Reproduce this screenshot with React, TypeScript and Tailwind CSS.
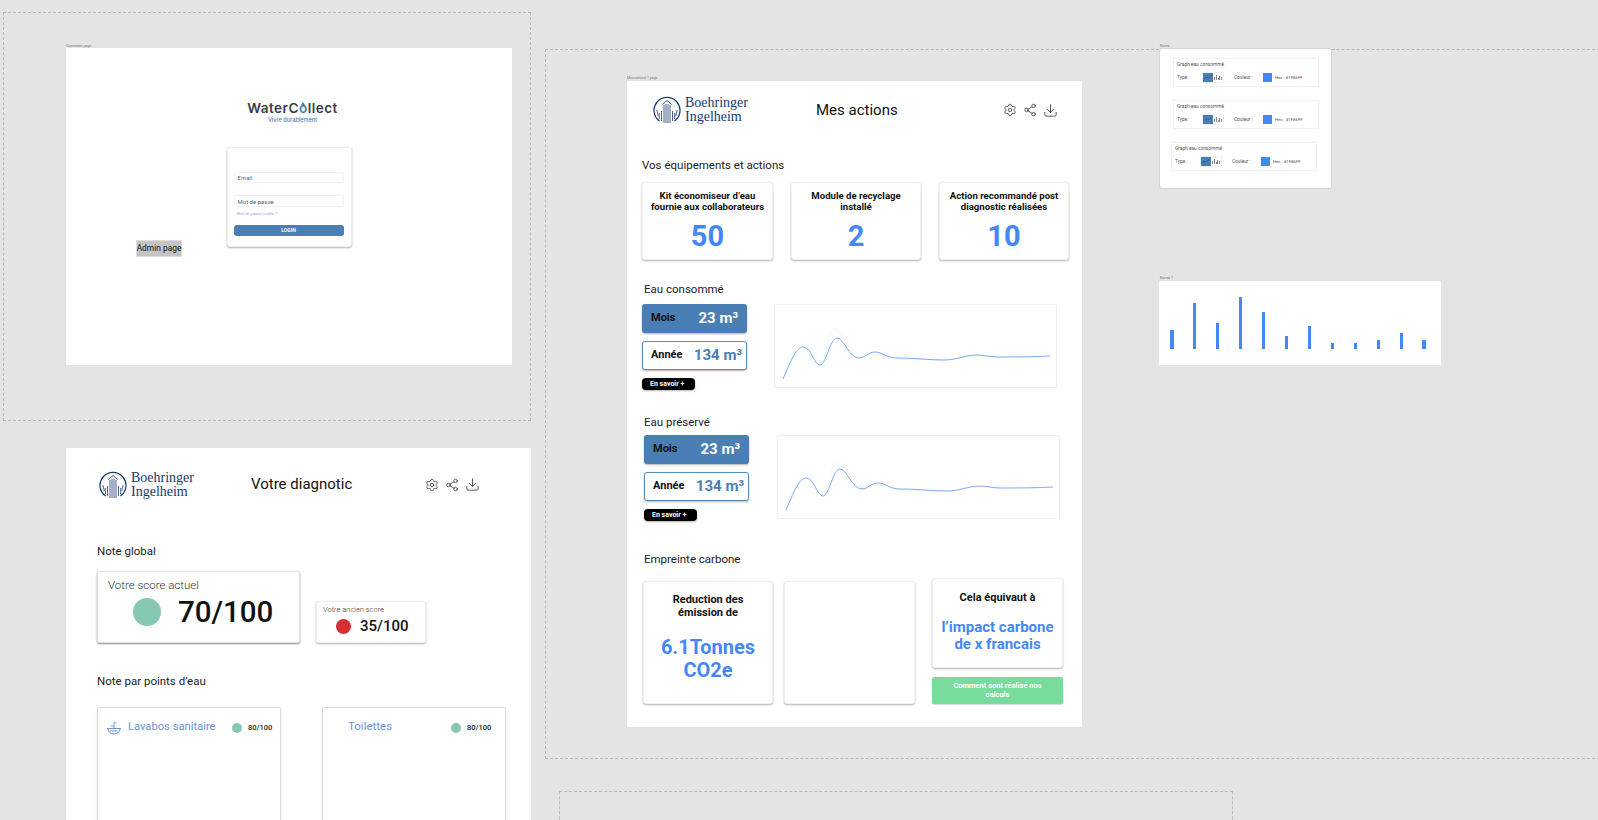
import { Settings, Share2, Download } from "lucide-react";

const BAR_HEIGHTS = [19, 46, 26, 52, 37, 13, 23, 6, 6, 9, 16, 9];

const CURVE =
  "M8 74 C15 58,21 42,28 42 C36 42,39 60,45 60 C51 60,55 33,62 33 C69 33,74 53,84 53 C90 53,93 47,100 47 C107 47,112 53,122 53 C140 53,155 55,169 55 C182 55,190 50,202 50 C210 50,214 52,222 52 C240 52,258 52,275 51";
const CURVE_FAINT =
  "M8 74 C15 55,21 38,28 40 C36 42,39 58,45 58 C51 58,53 24,59 24 C66 24,74 50,84 52 C90 53,93 50,100 49 C107 49,112 54,122 54 C140 54,155 55,169 55 C182 55,190 51,202 51 C210 51,214 52,222 52";

function Logo() {
  return (
    <div className="flex items-center gap-[4px]">
      <svg width="28" height="28" viewBox="0 0 28 28" fill="none" stroke="#163a72">
        <path d="M6.5 25 A13 13 0 1 1 21.5 25" strokeWidth="1.2" />
        <path d="M9.5 8.5 L14 4.5 L18.5 8.5" strokeWidth="0.9" />
        <path
          d="M11 9 V27 M13 8 V27 M15 8 V27 M17 9 V27 M8.5 15 V25 M19.5 15 V25 M6.3 17 V23 M21.7 17 V23 M3.8 14 L5.3 20 M24.2 14 L22.7 20"
          strokeWidth="0.8"
        />
      </svg>
      <div className="font-['Liberation_Serif',serif] text-[14px] leading-[14px] text-[#163a72]">
        <div>Boehringer</div>
        <div>Ingelheim</div>
      </div>
    </div>
  );
}

function ActionIcons() {
  return (
    <div className="flex items-center gap-[6px] text-[#222]">
      <Settings size={14} strokeWidth={1.2} />
      <Share2 size={14} strokeWidth={1.2} />
      <Download size={15} strokeWidth={1.2} />
    </div>
  );
}

function Label({ children, className = "" }: { children: React.ReactNode; className?: string }) {
  return <div className={`text-[11.5px] leading-[14px] text-[#1c1c1c] ${className}`}>{children}</div>;
}

function Kpi({ title, value, width }: { title: string[]; value: string; width: string }) {
  return (
    <div className={`flex h-[78px] flex-col items-center rounded-[3px] border border-[#efefef] bg-white pt-[7px] shadow-[0_1px_2px_rgba(0,0,0,0.3)] ${width}`}>
      <div className="text-center text-[9.6px] font-bold leading-[11px] text-[#111]">
        {title.map((t) => (
          <div key={t}>{t}</div>
        ))}
      </div>
      <div className="mt-[7px] text-[29px] font-bold leading-[34px] text-[#4488f8]">{value}</div>
    </div>
  );
}

function WaterBlock({ chartGap }: { chartGap: string }) {
  return (
    <div className="flex items-start">
      <div className="flex w-[105px] flex-col items-start gap-[8px]">
        <div className="flex h-[29px] w-full items-center justify-between rounded-[3px] bg-[#4a7fb5] px-[9px] shadow-[0_1px_2px_rgba(0,0,0,0.3)]">
          <span className="text-[11px] font-bold text-[#111]">Mois</span>
          <span className="text-[15px] font-bold text-white">23 m³</span>
        </div>
        <div className="flex h-[29px] w-full items-center justify-between rounded-[3px] border-[1.5px] border-[#5a8bbd] bg-white pl-[8px] pr-[4px] shadow-[0_1px_2px_rgba(0,0,0,0.3)]">
          <span className="text-[11px] font-bold text-[#111]">Année</span>
          <span className="text-[15px] font-bold text-[#4a7fb5]">134 m³</span>
        </div>
        <div className="flex h-[12px] w-[53px] items-center rounded-[4px] bg-black pl-[8px] text-[7px] font-bold text-white shadow-[0_1px_2px_rgba(0,0,0,0.3)]">
          En savoir +
        </div>
      </div>
      <div className={`h-[84px] w-[283px] rounded-[2px] border border-[#f0f0f0] bg-white ${chartGap}`}>
        <svg width="283" height="84" viewBox="0 0 283 84" fill="none">
          <path d={CURVE_FAINT} stroke="#e2f4f0" strokeWidth="0.6" />
          <path d={CURVE} stroke="#6ea2f5" strokeWidth="0.9" />
        </svg>
      </div>
    </div>
  );
}

function Dot({ size, color }: { size: string; color: string }) {
  return <span className={`block rounded-full ${size} ${color}`} />;
}

function PointCard({ name, icon }: { name: string; icon?: boolean }) {
  return (
    <div className="flex h-[200px] w-[184px] items-start rounded-[2px] border border-[#dcdcdc] bg-white pt-[12px] shadow-[0_1px_2px_rgba(0,0,0,0.15)]">
      {icon ? (
        <svg className="ml-[8px] mt-[1px]" width="16" height="14" viewBox="0 0 16 14" fill="none" stroke="#6b94cf" strokeWidth="1">
          <path d="M1 7.5 H15 M2 7.5 C2 11,5 13,8 13 C11 13,14 11,14 7.5 M4 10 H12" />
          <path d="M8 7 V2 C8 1,10 1,10 2.5 M5 5.5 C5 4.5,7 4.5,7 5.5" />
        </svg>
      ) : (
        <span className="ml-[8px] w-[16px]" />
      )}
      {icon ? (
        <span className="ml-[6px] w-[104px] text-[11.2px] leading-[14px] text-[#6b94cf]">{name}</span>
      ) : (
        <span className="-mt-[1px] ml-[1px] w-[103px] text-[11.5px] leading-[14px] text-[#6b94cf]">{name}</span>
      )}
      <span className="mt-[2px] flex items-center gap-[6px]">
        <Dot size="h-[10px] w-[10px]" color="bg-[#86c8b4]" />
        <span className="text-[7.5px] font-medium text-[#222]">80/100</span>
      </span>
    </div>
  );
}

function GraphSetting({ shift }: { shift?: boolean }) {
  return (
    <div className={`flex h-[29px] w-[146px] flex-col border border-[#f1f1f1] bg-white pl-[3px] pt-[3px] text-[4.8px] leading-[5px] text-[#555] shadow-[0_0_1px_rgba(0,0,0,0.1)] ${shift ? "-ml-[2px]" : ""}`}>
      <div>Graph eau consommé</div>
      <div className="mt-[5px] flex items-center">
        <span className="w-[25px]">Type :</span>
        <span className="flex h-[11px] w-[22px] rounded-[1px] border border-[#eee]">
          <span className="flex w-[10px] items-center justify-center bg-[#4a7fb5]">
            <svg width="8" height="5" viewBox="0 0 8 5" fill="none" stroke="#24466d" strokeWidth="0.6">
              <path d="M0 4 C2 1,3 4,5 2 C6 1,7 1,8 1" />
            </svg>
          </span>
          <span className="flex flex-1 items-end justify-center gap-[1px] pb-[2px]">
            <span className="h-[3px] w-[0.7px] bg-[#888]" />
            <span className="h-[5px] w-[0.7px] bg-[#888]" />
            <span className="h-[2px] w-[0.7px] bg-[#888]" />
            <span className="h-[4px] w-[0.7px] bg-[#888]" />
            <span className="h-[3px] w-[0.7px] bg-[#888]" />
          </span>
        </span>
        <span className="ml-[10px] w-[29px]">Couleur :</span>
        <span className="h-[9px] w-[9px] bg-[#4488f8]" />
        <span className="ml-[3px] text-[4.3px]">Hex : #1F86FF</span>
      </div>
    </div>
  );
}

function FrameName({ children, className }: { children: string; className: string }) {
  return <div className={`absolute text-[3.5px] leading-[4px] text-[#777] ${className}`}>{children}</div>;
}

export default function App() {
  return (
    <div className="relative h-[820px] w-[1598px] overflow-hidden bg-[#e4e4e4] font-['Roboto',sans-serif]">
      {/* canvas sections */}
      <div className="absolute left-[3px] top-[12px] h-[409px] w-[528px] border border-dashed border-[#b9b9b9]" />
      <div className="absolute left-[545px] top-[49px] h-[710px] w-[1100px] border border-dashed border-[#b9b9b9]" />
      <div className="absolute left-[559px] top-[791px] h-[100px] w-[674px] border border-dashed border-[#b9b9b9]" />

      <FrameName className="left-[66px] top-[44px]">Connexion page</FrameName>
      <FrameName className="left-[627px] top-[76px]">Mes actions 1 page</FrameName>
      <FrameName className="left-[1160px] top-[44px]">Notes</FrameName>
      <FrameName className="left-[1160px] top-[276px]">Barres 1</FrameName>

      {/* login */}
      <div className="absolute left-[66px] top-[48px] flex h-[317px] w-[446px] flex-col items-center bg-white">
        <div className="ml-[7px] mt-[53px] font-['Inter',sans-serif] text-[13.5px] font-semibold leading-[14px] tracking-[0.5px] text-[#3a3d4a]">
          WaterC
          <span className="relative text-[#3d7fc0]">
            o
            <span className="absolute left-1/2 top-[1.5px] h-0 w-0 -translate-x-1/2 border-x-[2px] border-b-[3px] border-x-transparent border-b-[#3d7fc0]" />
          </span>
          llect
        </div>
        <div className="ml-[7px] mt-[2px] font-['Inter',sans-serif] text-[5.6px] font-medium leading-[6px] text-[#4a7fb5]">
          Vivre durablement
        </div>
        <div className="mt-[24px] flex h-[100px] w-[125px] flex-col rounded-[3px] border border-[#eeeeee] bg-white px-[6px] pt-[24px] shadow-[0_1px_2px_rgba(0,0,0,0.3)]">
          <div className="flex h-[11px] w-[110px] items-center rounded-[2px] border border-[#f3f3f3] pl-[3px] text-[6px] text-[#666]">Email</div>
          <div className="mt-[12px] flex h-[12px] w-[110px] items-center rounded-[2px] border border-[#f3f3f3] pl-[3px] text-[6px] text-[#666]">Mot de passe</div>
          <div className="mt-[4px] pl-[3px] text-[4.2px] leading-[6px] text-[#8fb0d2]">Mot de passe oublié ?</div>
          <div className="mt-[8px] flex h-[11px] w-[110px] items-center justify-center rounded-[3px] bg-[#4a7fb5] text-[5px] font-bold text-white">LOGIN</div>
        </div>
        <div className="absolute left-[70px] top-[192px] flex h-[17px] w-[46px] items-center justify-center whitespace-nowrap border border-[#dddddd] bg-[#c4c4c4] text-[8.4px] text-[#111]">
          Admin page
        </div>
      </div>

      {/* diagnostic */}
      <div className="absolute left-[66px] top-[448px] h-[372px] w-[465px] overflow-hidden bg-white pl-[31px]">
        <div className="ml-[2px] mt-[23px] flex h-[27px] items-center">
          <div className="w-[152px]">
            <Logo />
          </div>
          <div className="w-[174px] text-[15px] text-[#111]">Votre diagnotic</div>
          <ActionIcons />
        </div>
        <Label className="mt-[46px]">Note global</Label>
        <div className="mt-[13px] flex items-end gap-[16px]">
          <div className="h-[72px] w-[203px] rounded-[2px] border border-[#e0e0e0] bg-white pl-[10px] pt-[6px] shadow-[0_1px_2px_rgba(0,0,0,0.45)]">
            <div className="text-[11.5px] font-light leading-[14px] text-[#333]">Votre score actuel</div>
            <div className="ml-[25px] mt-[3px] flex items-center gap-[17px]">
              <Dot size="h-[28px] w-[28px]" color="bg-[#86c8b4]" />
              <span className="text-[29.5px] font-medium leading-[34px] text-[#111]">70/100</span>
            </div>
          </div>
          <div className="h-[42px] w-[110px] rounded-[2px] border border-[#eeeeee] bg-white pl-[6px] pt-[4px] shadow-[0_1px_2px_rgba(0,0,0,0.3)]">
            <div className="text-[7.5px] font-light leading-[8px] text-[#333]">Votre ancien score</div>
            <div className="ml-[13px] mt-[3px] flex items-center gap-[9px]">
              <Dot size="h-[15px] w-[15px]" color="bg-[#d62f36]" />
              <span className="text-[15px] font-medium leading-[18px] text-[#111]">35/100</span>
            </div>
          </div>
        </div>
        <Label className="mt-[31px]">Note par points d’eau</Label>
        <div className="mt-[19px] flex gap-[41px]">
          <PointCard name="Lavabos sanitaire" icon />
          <PointCard name="Toilettes" />
        </div>
      </div>

      {/* mes actions */}
      <div className="absolute left-[627px] top-[81px] h-[646px] w-[455px] bg-white pl-[15px]">
        <div className="ml-[11px] pt-[15px]">
          <div className="flex h-[28px] items-center">
            <div className="w-[163px]">
              <Logo />
            </div>
            <div className="w-[187px] text-[15px] text-[#111]">Mes actions</div>
            <ActionIcons />
          </div>
        </div>
        <Label className="mt-[34px]">Vos équipements et actions</Label>
        <div className="mt-[10px] flex gap-[18px]">
          <Kpi width="w-[131px]" title={["Kit économiseur d’eau", "fournie aux collaborateurs"]} value="50" />
          <Kpi width="w-[130px]" title={["Module de recyclage", "installé"]} value="2" />
          <Kpi width="w-[130px]" title={["Action recommandé post", "diagnostic réalisées"]} value="10" />
        </div>
        <Label className="ml-[2px] mt-[22px]">Eau consommé</Label>
        <div className="mt-[8px]">
          <WaterBlock chartGap="ml-[27px]" />
        </div>
        <Label className="ml-[2px] mt-[25px]">Eau préservé</Label>
        <div className="ml-[2px] mt-[6px]">
          <WaterBlock chartGap="ml-[28px]" />
        </div>
        <Label className="ml-[2px] mt-[31px]">Empreinte carbone</Label>
        <div className="ml-[1px] mt-[12px] flex items-start">
          <div className="mt-[3px] flex h-[123px] w-[130px] flex-col items-center rounded-[3px] border border-[#efefef] bg-white pt-[11px] text-center shadow-[0_1px_2px_rgba(0,0,0,0.3)]">
            <div className="text-[11px] font-bold leading-[13px] text-[#111]">
              Reduction des
              <br />
              émission de
            </div>
            <div className="mt-[17px] text-[20px] font-bold leading-[23px] text-[#4488f8]">
              6.1Tonnes
              <br />
              CO2e
            </div>
          </div>
          <div className="ml-[11px] mt-[3px] h-[123px] w-[131px] rounded-[3px] border border-[#efefef] bg-white shadow-[0_1px_2px_rgba(0,0,0,0.3)]" />
          <div className="ml-[17px] flex w-[131px] flex-col gap-[9px]">
            <div className="flex h-[90px] flex-col items-center rounded-[3px] border border-[#efefef] bg-white pt-[12px] text-center shadow-[0_1px_2px_rgba(0,0,0,0.3)]">
              <div className="text-[11px] font-bold leading-[13px] text-[#111]">Cela équivaut à</div>
              <div className="mt-[15px] text-[15px] font-bold leading-[17px] text-[#4488f8]">
                l’impact carbone
                <br />
                de x francais
              </div>
            </div>
            <div className="flex h-[27px] items-center justify-center rounded-[2px] bg-[#78dc9c] text-center text-[7.5px] font-bold leading-[8.5px] text-white shadow-[0_1px_1px_rgba(0,0,0,0.15)]">
              Comment sont réalisé nos
              <br />
              calculs
            </div>
          </div>
        </div>
      </div>

      {/* notes */}
      <div className="absolute left-[1159px] top-[48px] flex h-[141px] w-[173px] flex-col gap-[13px] rounded-[3px] border border-[#d6d6d6] bg-white pl-[13px] pt-[9px]">
        <GraphSetting />
        <GraphSetting />
        <GraphSetting shift />
      </div>

      {/* bars */}
      <div className="absolute left-[1159px] top-[281px] flex h-[84px] w-[282px] items-end justify-between bg-white pb-[16px] pl-[11px] pr-[15px]">
        {BAR_HEIGHTS.map((h, i) => (
          <div key={i} className="w-[3.5px] bg-[#4488f8]" style={{ height: h }} />
        ))}
      </div>
    </div>
  );
}
